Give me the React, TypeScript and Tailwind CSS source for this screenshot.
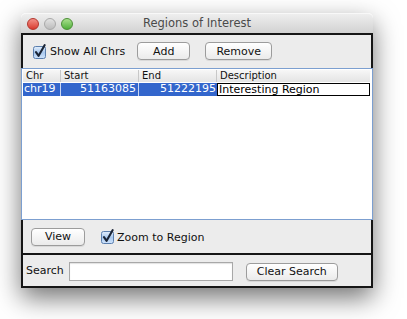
import React from "react";

const font = { fontFamily: '"DejaVu Sans", "Liberation Sans", sans-serif' };

function AquaCheck() {
  return (
    <svg width="15" height="15" viewBox="0 0 15 15" className="shrink-0">
      <defs>
        <linearGradient id="cbg" x1="0" y1="0" x2="0" y2="1">
          <stop offset="0" stopColor="#e4effc" />
          <stop offset="0.5" stopColor="#a9c9ef" />
          <stop offset="1" stopColor="#cfe3fb" />
        </linearGradient>
      </defs>
      <rect x="1.5" y="2.5" width="12" height="12" rx="2" fill="url(#cbg)" stroke="#5b7fae" />
      <path
        d="M4 8.2 L6.6 11.8 L12.6 1.2"
        fill="none"
        stroke="#1b2536"
        strokeWidth="2.1"
        strokeLinecap="round"
        strokeLinejoin="round"
      />
    </svg>
  );
}

function Btn({ label, w }: { label: string; w: string }) {
  return (
    <button
      className={`${w} h-[18px] rounded-[4px] border border-[#9c9c9c] bg-gradient-to-b from-white to-[#ebebeb] text-[11px] leading-none text-[#111] shadow-[0_1px_0_rgba(0,0,0,0.08)] flex items-center justify-center`}
    >
      {label}
    </button>
  );
}

function Light({ from, to, border }: { from: string; to: string; border: string }) {
  return (
    <span
      className={`w-[12px] h-[12px] rounded-full border ${border} bg-gradient-to-b ${from} ${to}`}
    />
  );
}

export default function App() {
  return (
    <div className="w-[407px] h-[319px] bg-white pt-[13px] pl-[21px] overflow-hidden" style={font}>
      <div className="w-[352px] flex flex-col shadow-[0_10px_26px_rgba(0,0,0,0.55)] rounded-t-[5px]">
        {/* title bar */}
        <div className="h-[20px] grid grid-cols-[1fr_auto_1fr] items-center rounded-t-[5px] bg-gradient-to-b from-[#eeeeee] to-[#d2d2d2] border-t border-[#f8f8f8]">
          <div className="flex items-center gap-[5px] pl-[6px]">
            <Light from="from-[#f28f87]" to="to-[#d8372d]" border="border-[#b3362d]" />
            <Light from="from-[#e3e3e3]" to="to-[#bcbcbc]" border="border-[#a9a9a9]" />
            <Light from="from-[#a9e08d]" to="to-[#4fb03a]" border="border-[#4a8f34]" />
          </div>
          <div className="text-[11.5px] text-[#4a4a4a] leading-none">Regions of Interest</div>
          <div />
        </div>

        {/* toolbar */}
        <div className="h-[35px] bg-[#ececec] border-x-2 border-t-2 border-[#161616] flex items-center pl-[9px] pb-[1px]">
          <AquaCheck />
          <span className="ml-[3px] text-[11px] text-[#111] mt-[3px]">Show All Chrs</span>
          <div className="ml-[12px]">
            <Btn label="Add" w="w-[53px]" />
          </div>
          <div className="ml-[15px]">
            <Btn label="Remove" w="w-[67px]" />
          </div>
        </div>

        {/* table */}
        <div className="h-[152px] bg-white border border-[#7c9fd0] pt-[1px] pl-[1px] pr-[2px]">
          <div className="flex h-[12px] bg-gradient-to-b from-[#f7f7f7] to-[#e4e4e4] text-[10px] leading-[12px] text-[#111]">
            <div className="w-[38px] pl-[3px] border-r border-[#c8c8c8]">Chr</div>
            <div className="w-[78px] pl-[3px] border-r border-[#c8c8c8]">Start</div>
            <div className="w-[78px] pl-[3px] border-r border-[#c8c8c8]">End</div>
            <div className="flex-1 pl-[3px]">Description</div>
          </div>
          <div className="flex h-[13px] mt-[1px] bg-[#3366cc] text-[11px] leading-[12px] text-white">
            <div className="w-[38px] pl-[1px] border-r border-[#c9d6f2]">chr19</div>
            <div className="w-[78px] pr-[2px] text-right border-r border-[#c9d6f2]">51163085</div>
            <div className="w-[78px] pr-[1px] text-right">51222195</div>
            <div className="flex-1 bg-white text-black border border-black pl-[1px] leading-[11px]">
              Interesting Region
            </div>
          </div>
        </div>

        {/* view panel */}
        <div className="h-[35px] bg-[#ececec] border-x-2 border-b-2 border-[#161616] flex items-center pl-[8px]">
          <Btn label="View" w="w-[54px]" />
          <div className="ml-[15px] flex items-center">
            <AquaCheck />
            <span className="ml-[2px] text-[11px] text-[#111] mt-[3px]">Zoom to Region</span>
          </div>
        </div>

        {/* search panel */}
        <div className="h-[33px] bg-[#ececec] border-x-2 border-b-2 border-[#161616] flex items-center pl-[3px] pt-[2px]">
          <span className="text-[11px] text-[#111]">Search</span>
          <div className="ml-[5px] w-[164px] h-[19px] bg-white border border-[#a8a8a8] shadow-[inset_0_1px_1px_rgba(0,0,0,0.12)]" />
          <div className="ml-[13px]">
            <Btn label="Clear Search" w="w-[92px]" />
          </div>
        </div>
      </div>
    </div>
  );
}
